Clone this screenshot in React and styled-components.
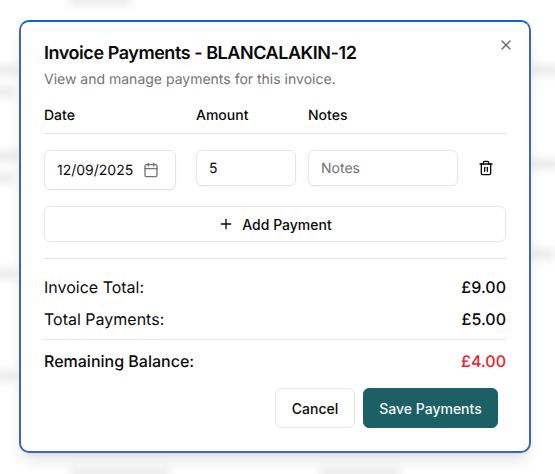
import React from 'react';
import styled, { createGlobalStyle } from 'styled-components';
import { Calendar, Plus, Trash2, X } from 'lucide-react';

const GlobalStyle = createGlobalStyle`
  html, body {
    margin: 0;
    background: #fff;
    font-family: Inter, "Liberation Sans", sans-serif;
    color: #0a0a0a;
    text-rendering: geometricPrecision;
    -webkit-font-smoothing: antialiased;
  }
`;

const Page = styled.div`
  position: relative;
  width: 555px;
  height: 474px;
  overflow: hidden;
  background: #fff;
`;

// the page behind the modal, only visible as blurred smudges
const Smudge = styled.div`
  position: absolute;
  left: ${p => p.$x}px;
  top: ${p => p.$y}px;
  width: ${p => p.$w}px;
  height: 8px;
  background: #e4e4e4;
  filter: blur(5px);
`;

const Dialog = styled.div`
  position: absolute;
  left: 19px;
  top: 20px;
  box-sizing: border-box;
  width: 512px;
  height: 433px;
  padding: 21px 23px 0 23px;
  background: #fff;
  border: 2px solid #3f65ba;
  border-top-color: #0b63d6;
  border-radius: 10px;
  box-shadow: 0 10px 15px -3px rgba(0, 0, 0, 0.1), 0 4px 6px -4px rgba(0, 0, 0, 0.1);
`;

const CloseButton = styled.button`
  position: absolute;
  top: 15px;
  right: 15px;
  display: flex;
  padding: 0;
  border: 0;
  background: none;
  color: #6b6b6b;
`;

const Title = styled.h2`
  margin: 0;
  font-size: 18px;
  line-height: 22px;
  font-weight: 600;
  letter-spacing: -0.45px;
`;

const Description = styled.p`
  margin: 5px 0 0;
  font-size: 14px;
  line-height: 20px;
  color: #737373;
`;

const HeaderRow = styled.div`
  display: grid;
  grid-template-columns: 152px 112px 1fr;
  margin-top: 16px;
  padding-bottom: 7px;
  border-bottom: 1px solid #e5e5e5;
  font-size: 14px;
  line-height: 20px;
  font-weight: 500;
`;

const PaymentRow = styled.div`
  display: flex;
  align-items: flex-start;
  margin-top: 16px;
`;

const FieldBox = styled.div`
  box-sizing: border-box;
  display: flex;
  align-items: center;
  gap: 10px;
  flex: none;
  width: ${p => p.$w}px;
  height: ${p => p.$tall ? 40 : 36}px;
  margin-left: ${p => p.$gap || 0}px;
  padding: 0 12px;
  border: 1px solid #e5e5e5;
  border-radius: 6px;
  font-size: 14px;
  color: ${p => p.$placeholder ? '#737373' : '#0a0a0a'};
  box-shadow: 0 1px 2px rgba(0, 0, 0, 0.04);
`;

const TrashButton = styled.button`
  display: flex;
  justify-content: center;
  align-items: center;
  width: 36px;
  height: 36px;
  margin-left: 10px;
  padding: 0;
  border: 0;
  background: none;
  color: #0a0a0a;
`;

const AddButton = styled.button`
  box-sizing: border-box;
  display: flex;
  align-items: center;
  justify-content: center;
  gap: 8px;
  width: 100%;
  height: 36px;
  margin-top: 16px;
  border: 1px solid #e5e5e5;
  border-radius: 6px;
  background: #fff;
  font: 500 14px Inter, sans-serif;
  color: #0a0a0a;
`;

const Summary = styled.div`
  margin-top: 16px;
  padding-top: 16px;
  border-top: 1px solid #e5e5e5;
`;

const SummaryRow = styled.div`
  display: flex;
  justify-content: space-between;
  align-items: center;
  height: 24px;
  margin-bottom: 8px;
  font-size: 16px;
  font-weight: ${p => p.$strong ? 500 : 400};
`;

const Amount = styled.span`
  font-weight: 500;
  color: ${p => p.$danger ? '#ef1d2a' : '#0a0a0a'};
`;

const BalanceRow = styled(SummaryRow)`
  box-sizing: border-box;
  height: 44px;
  margin: 0;
  padding-bottom: 2px;
  border-top: 1px solid #e5e5e5;
`;

const Footer = styled.div`
  display: flex;
  justify-content: flex-end;
  gap: 8px;
  margin-top: 5px;
  padding-right: 8px;
`;

const Button = styled.button`
  box-sizing: border-box;
  height: 40px;
  width: ${p => p.$w}px;
  padding: 0;
  border: 1px solid ${p => p.$primary ? '#1b6065' : '#e5e5e5'};
  border-radius: 6px;
  background: ${p => p.$primary ? '#1b6065' : '#fff'};
  color: ${p => p.$primary ? '#f5f7f7' : '#0a0a0a'};
  font: 500 14px Inter, sans-serif;
`;

const smudges = [
  [-6, 66, 26], [-6, 88, 20], [-6, 152, 26], [-6, 174, 20], [-6, 270, 24], [-6, 372, 24],
  [530, 66, 30], [530, 160, 30], [530, 250, 24],
  [70, 470, 100], [320, 470, 80], [70, -4, 60],
];

export default function App() {
  return (
    <Page>
      <GlobalStyle />
      {smudges.map(([x, y, w]) => (
        <Smudge key={`${x}-${y}`} $x={x} $y={y} $w={w} />
      ))}
      <Dialog>
        <CloseButton><X size={16} /></CloseButton>
        <Title>Invoice Payments - BLANCALAKIN-12</Title>
        <Description>View and manage payments for this invoice.</Description>
        <HeaderRow>
          <span>Date</span>
          <span>Amount</span>
          <span>Notes</span>
        </HeaderRow>
        <PaymentRow>
          <FieldBox $tall $w={132}>
            12/09/2025
            <Calendar size={16} color="#737373" />
          </FieldBox>
          <FieldBox $gap={20} $w={100}>5</FieldBox>
          <FieldBox $gap={12} $w={150} $placeholder>Notes</FieldBox>
          <TrashButton><Trash2 size={16} /></TrashButton>
        </PaymentRow>
        <AddButton><Plus size={16} />Add Payment</AddButton>
        <Summary>
          <SummaryRow>Invoice Total:<Amount>£9.00</Amount></SummaryRow>
          <SummaryRow>Total Payments:<Amount>£5.00</Amount></SummaryRow>
          <BalanceRow $strong>Remaining Balance:<Amount $danger>£4.00</Amount></BalanceRow>
        </Summary>
        <Footer>
          <Button $w={80}>Cancel</Button>
          <Button $primary $w={135}>Save Payments</Button>
        </Footer>
      </Dialog>
    </Page>
  );
}
